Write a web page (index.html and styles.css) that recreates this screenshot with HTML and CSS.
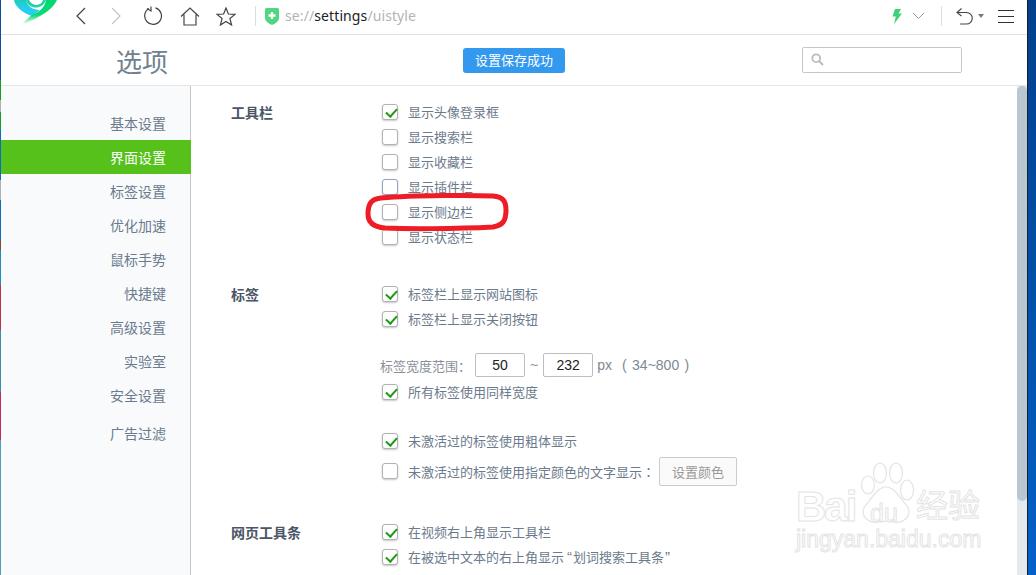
FILE: index.html
```html
<!DOCTYPE html>
<html lang="zh">
<head>
<meta charset="utf-8">
<title>选项</title>
<link rel="stylesheet" href="styles.css">
</head>
<body>
<div class="desk-left"></div>
<div class="window">
  <header class="toolbar">
    <svg class="logo" width="60" height="24" viewBox="0 0 60 24"><defs><linearGradient id="lg" x1="0" y1="0" x2="0" y2="1"><stop offset="0" stop-color="#00d96f"/><stop offset="0.62" stop-color="#06da74"/><stop offset="1" stop-color="#effcf4"/></linearGradient><linearGradient id="lc" x1="0" y1="0" x2="0" y2="1"><stop offset="0" stop-color="#1fcdb8"/><stop offset="0.55" stop-color="#27cdf0"/><stop offset="1" stop-color="#27cdf0"/></linearGradient></defs><path d="M14 0 C15 7 23 13 32 16 L40 10 C33 10 27 6 26 0Z" fill="url(#lc)"/><path d="M57 0 C53 9 42 16 24 24 L23 23 L31 15.500 C40 12 45 7 46 0Z" fill="url(#lg)"/><path d="M26 0 C28 9 42 11 46 0Z" fill="#1fd2a8"/><path d="M29 0 C31 6 41 7 43 0Z" fill="#fff"/></svg>
    <svg class="ic nav-back" width="16" height="18" viewBox="0 0 16 18"><path d="M11 1 L3 9 L11 17" fill="none" stroke="#444" stroke-width="1.2"/></svg>
    <svg class="ic nav-fwd" width="16" height="18" viewBox="0 0 16 18"><path d="M4 1 L12 9 L4 17" fill="none" stroke="#c4c4c4" stroke-width="1.2"/></svg>
    <svg class="ic nav-reload" width="20" height="20" viewBox="0 0 20 20"><path d="M6 2.6 A8.400 8.400 0 1 0 12.500 1.900 M8 0.500 L8 5 L4 2.500" fill="none" stroke="#444" stroke-width="1.2"/></svg>
    <svg class="ic nav-home" width="20" height="19" viewBox="0 0 20 19"><path d="M1 9.500 L10 1 L19 9.500 M4 7.500 L4 18 L16 18 L16 7.500" fill="none" stroke="#444" stroke-width="1.2"/></svg>
    <svg class="ic nav-star" width="20" height="19" viewBox="0 0 20 19"><path d="M10 1 L12.400 7 L19 7.400 L13.900 11.500 L15.600 18 L10 14.400 L4.400 18 L6.100 11.500 L1 7.400 L7.600 7 Z" fill="none" stroke="#444" stroke-width="1.2"/></svg>
    <span class="sep"></span>
    <svg class="shield" width="14" height="17" viewBox="0 0 14 17"><path d="M1.500 0 H12.500 Q14 0 14 1.500 V10 Q14 14 7 17 Q0 14 0 10 V1.500 Q0 0 1.500 0Z" fill="#4fd683"/><path d="M7 4 V11 M3.500 7.500 H10.500" stroke="#fff" stroke-width="2.4"/></svg>
    <span class="url">se://<b>settings</b>/uistyle</span>
    <span class="spacer"></span>
    <svg class="bolt" width="10" height="15" viewBox="0 0 10 15"><path d="M3 0 H9 L6.500 4.500 H10 L2 15 L3.800 7.500 H0.500 Z" fill="#3fd178"/></svg>
    <svg class="chev" width="13" height="8" viewBox="0 0 13 8"><path d="M1 1 L6.500 6.500 L12 1" fill="none" stroke="#999" stroke-width="1"/></svg>
    <span class="sep sep-right"></span>
    <svg class="undo" width="17" height="17" viewBox="0 0 17 17"><path d="M5.500 0.500 L1 4.500 L5.500 8 M1 4.500 H10.500 A5.700 5.700 0 0 1 10.500 16 H4" fill="none" stroke="#444" stroke-width="1.1"/></svg>
    <span class="caret"></span>
    <span class="menu"><i></i><i></i><i></i></span>
  </header>
  <div class="page-head">
    <h1>选项</h1>
    <span class="saved">设置保存成功</span>
    <span class="search"><svg width="13" height="13" viewBox="0 0 13 13"><circle cx="5.200" cy="5.200" r="3.900" fill="none" stroke="#bbb" stroke-width="1.8"/><path d="M8 8 L12 12" stroke="#bbb" stroke-width="2"/></svg></span>
  </div>
  <div class="body">
    <nav class="side">
      <a>基本设置</a>
      <a class="on">界面设置</a>
      <a>标签设置</a>
      <a>优化加速</a>
      <a>鼠标手势</a>
      <a>快捷键</a>
      <a>高级设置</a>
      <a>实验室</a>
      <a>安全设置</a>
      <a class="last">广告过滤</a>
    </nav>
    <main class="content">
      <section class="group g-tool">
        <h2>工具栏</h2>
        <div class="opts">
          <label class="opt"><span class="cb ck"></span>显示头像登录框</label>
          <label class="opt"><span class="cb"></span>显示搜索栏</label>
          <label class="opt"><span class="cb"></span>显示收藏栏</label>
          <label class="opt"><span class="cb hover"></span>显示插件栏</label>
          <label class="opt"><span class="cb"></span>显示侧边栏</label>
          <label class="opt"><span class="cb"></span>显示状态栏</label>
        </div>
      </section>
      <section class="group g-tab">
        <h2>标签</h2>
        <div class="opts">
          <label class="opt"><span class="cb ck"></span>标签栏上显示网站图标</label>
          <label class="opt"><span class="cb ck"></span>标签栏上显示关闭按钮</label>
          <div class="range"><span class="lbl">标签宽度范围<span class="tc">：</span></span><span class="num n1">50</span><span class="til">~</span><span class="num n2">232</span><span class="px">px</span><span class="limit">( 34~800 )</span></div>
          <label class="opt"><span class="cb ck"></span>所有标签使用同样宽度</label>
          <label class="opt mt"><span class="cb ck"></span>未激活过的标签使用粗体显示</label>
          <label class="opt opt-btn"><span class="cb"></span>未激活过的标签使用指定颜色的文字显示<span class="tc">：</span><span class="btn">设置颜色</span></label>
        </div>
      </section>
      <section class="group g-web">
        <h2>网页工具条</h2>
        <div class="opts">
          <label class="opt"><span class="cb ck"></span>在视频右上角显示工具栏</label>
          <label class="opt"><span class="cb ck"></span>在被选中文本的右上角显示<span class="ql">“</span>划词搜索工具条<span class="qr">”</span></label>
        </div>
      </section>
    </main>
    <div class="scroll"><span class="thumb"></span></div>
  </div>
  <svg class="circle" width="146" height="42" viewBox="0 0 146 42"><path d="M16 6 C50 3 110 3 128 4 C138 5 141 9 141 18 C141 29 138 33 128 35 C90 37 40 37 20 36 C8 35 3 30 3 22 C3 12 6 7 16 6Z" fill="none" stroke="#ee1c25" stroke-width="5"/></svg>
  <div class="wm">
    <svg width="64" height="64" viewBox="0 0 64 64"><g fill="#fff" stroke="#e4e4e4" stroke-width="1.2"><ellipse cx="13" cy="23" rx="6.500" ry="9"/><ellipse cx="25" cy="11" rx="6.500" ry="10"/><ellipse cx="41" cy="11" rx="6.500" ry="10"/><ellipse cx="52" cy="28" rx="6.500" ry="10"/><path d="M31 25 C40 25 46 38 52 44 C58 54 48 62 38 60 C34 59 28 59 24 60 C14 62 4 54 10 44 C16 38 22 25 31 25Z"/></g></svg>
    <span class="wm-bai">Bai</span><span class="wm-du">du</span><span class="wm-jy">经验</span>
    <span class="wm-url">jingyan.baidu.com</span>
  </div>
</div>
<div class="desk-right"></div>
</body>
</html>
```
FILE: styles.css
```css
* { box-sizing: border-box; }
html, body { margin: 0; height: 100%; overflow: hidden; }
body {
  display: flex;
  width: 1036px;
  height: 575px;
  background: #fff;
  font-family: "Noto Sans CJK SC", "Liberation Sans", sans-serif;
  font-size: 13px;
  color: #6b7a8c;
}
.desk-left {
  width: 1px;
  background: linear-gradient(#0b4f9e 0 80px, #12a020 80px 100px, #b0b0b0 100px 112px, #12a020 112px 130px, #0b6fc0 130px 180px, #b0b0b0 180px 200px, #0b6fc0 200px 240px, #7a5030 240px 250px, #1f8fb8 250px 285px, #c0304f 285px 330px, #3a8fa8 330px 392px, #c8285f 392px 440px, #4aa0b8 440px);
}
.desk-right { width: 9px; border-left: 1px solid #123; background: linear-gradient(#03408a, #0450a8 50%, #0560c8); }
.window { position: relative; flex: 1; display: flex; flex-direction: column; min-width: 0; background: #fff; }

.toolbar { position: relative; height: 35px; flex: none; display: flex; align-items: center; padding-bottom: 2px; border-bottom: 1px solid #e2e2e2; }
.logo { position: absolute; left: -1px; top: 0; }
.ic { flex: none; }
.nav-back { margin-left: 73px; }
.nav-fwd { margin-left: 18px; }
.nav-reload { margin-left: 19px; }
.nav-home { margin-left: 17px; }
.nav-star { margin-left: 16px; }
.sep { width: 1px; height: 20px; background: #dedede; margin-left: 19px; flex: none; }
.shield { margin-left: 9px; flex: none; }
.url { margin-left: 6px; margin-bottom: 2px; font-size: 14px; letter-spacing: 0.1px; color: #b4b4b4; font-family: "Noto Sans", "Open Sans", sans-serif; }
.url b { font-weight: 400; color: #222; }
.spacer { flex: 1; }
.bolt { flex: none; }
.chev { margin-left: 10px; flex: none; }
.sep-right { margin-left: 16px; }
.undo { margin-left: 14px; flex: none; }
.caret { margin-left: 5px; width: 0; height: 0; border: 3px solid transparent; border-top: 4px solid #777; border-bottom: 0; flex: none; }
.menu { margin-left: 14px; margin-right: 13px; width: 16px; display: flex; flex-direction: column; gap: 5px; flex: none; }
.menu i { display: block; height: 1px; background: #333; }

.page-head { position: relative; height: 51px; flex: none; display: flex; align-items: center; border-bottom: 1px solid #e6e6e6; }
.page-head h1 { margin: 0 0 0 115px; font-size: 26px; font-weight: 400; color: #71818f; width: 347px; line-height: 1; padding-top: 2px; }
.saved { width: 102px; height: 25px; background: #3399ee; color: #fff; border-radius: 3px; text-align: center; line-height: 24px; font-size: 13px; }
.search { margin-left: 237px; width: 160px; height: 26px; margin-bottom: 1px; border: 1px solid #c6c6c6; border-radius: 2px; display: flex; align-items: center; padding-left: 8px; }

.body { flex: 1; display: flex; min-height: 0; }
.side { width: 190px; flex: none; background: #f9fafc; border-right: 1px solid #c8c8c8; padding-top: 20px; text-align: right; font-size: 14px; }
.side a { display: block; height: 34px; line-height: 34px; padding-right: 24px; color: #6b7a8c; }
.side a.on { background: #55c11a; color: #fff; margin-right: -1px; padding-right: 25px; }
.side a.last { margin-top: 4px; }

.content { flex: 1; padding: 16px 0 0 40px; min-width: 0; overflow: hidden; }
.group { display: flex; }
.group h2 { margin: 0; width: 151px; flex: none; font-size: 14px; font-weight: 700; line-height: 20px; color: #4a5666; }
.g-tab { margin-top: 35px; }
.g-web { margin-top: 34px; }
.opts { flex: 1; }
.opt { display: flex; align-items: center; height: 25px; white-space: nowrap; }
.opts > .opt:first-child { margin-top: -3px; }
.cb { width: 16px; height: 16px; border: 1px solid #b2b2b2; border-radius: 3px; background: #fff; box-shadow: 0 1px 2px rgba(0,0,0,.22); margin-right: 10px; flex: none; position: relative; }
.cb.hover { border-color: #8ea4c4; }
.cb.ck::after { content: ""; position: absolute; left: 5px; top: 1.500px; width: 5px; height: 9px; border: solid #1f9a12; border-width: 0 2px 2px 0; transform: rotate(42deg); }
.tc { font-family: "Noto Sans CJK TC", sans-serif; }
.range { height: 24px; margin-top: 22px; display: flex; align-items: center; margin-left: -2px; color: #8a8f98; white-space: nowrap; }
.num { width: 50px; height: 24px; border: 1px solid #bdbdbd; border-radius: 2px; color: #222; text-align: center; line-height: 22px; font-size: 14px; font-family: "Liberation Sans", sans-serif; }
.n1 { margin-left: 4px; }
.til { margin: 0 5px; font-family: "Liberation Sans", sans-serif; font-size: 14px; }
.px { margin-left: 4px; font-size: 14px; color: #7d8894; font-family: "Liberation Sans", sans-serif; }
.limit { margin-left: 10px; font-size: 14px; word-spacing: 1.500px; color: #7d8894; font-family: "Liberation Sans", sans-serif; }
.range + .opt { margin-top: 2px; }
.mt { margin-top: 24px; }
.opt-btn { height: 34px; margin-top: 1px; }
.btn { width: 78px; height: 29px; border: 1px solid #ccc; border-radius: 2px; background: #fafafa; color: #999; text-align: center; line-height: 27px; margin-left: 4px; }
.ql, .qr { font-family: "Liberation Sans", sans-serif; font-size: 15px; }
.ql { margin: 0 1px 0 3px; }
.qr { margin: 0 3px 0 1px; }

.scroll { width: 10px; flex: none; background: #e4e9ee; }
.thumb { display: block; height: 415px; background: #b9c7d3; border-radius: 5px; }

.circle { position: absolute; left: 364px; top: 192px; pointer-events: none; }
.wm { position: absolute; left: 793px; top: 462px; width: 190px; height: 92px; color: #fff; pointer-events: none; }
.wm svg { position: absolute; left: 61px; top: 0; }
.wm span { position: absolute; color: #fff; -webkit-text-stroke: 1px #e4e4e4; font-family: "Liberation Sans", "Noto Sans CJK SC", sans-serif; }
.wm-bai { left: 2px; top: 24px; font-size: 42px; font-weight: 700; line-height: 1; letter-spacing: -2px; }
.wm-du { left: 76px; top: 39px; font-size: 25px; line-height: 1; }
.wm-jy { left: 122px; top: 28px; font-size: 32px; line-height: 1; white-space: nowrap; }
.wm-url { left: 2px; top: 66px; font-size: 23px; line-height: 1; white-space: nowrap; }
```
